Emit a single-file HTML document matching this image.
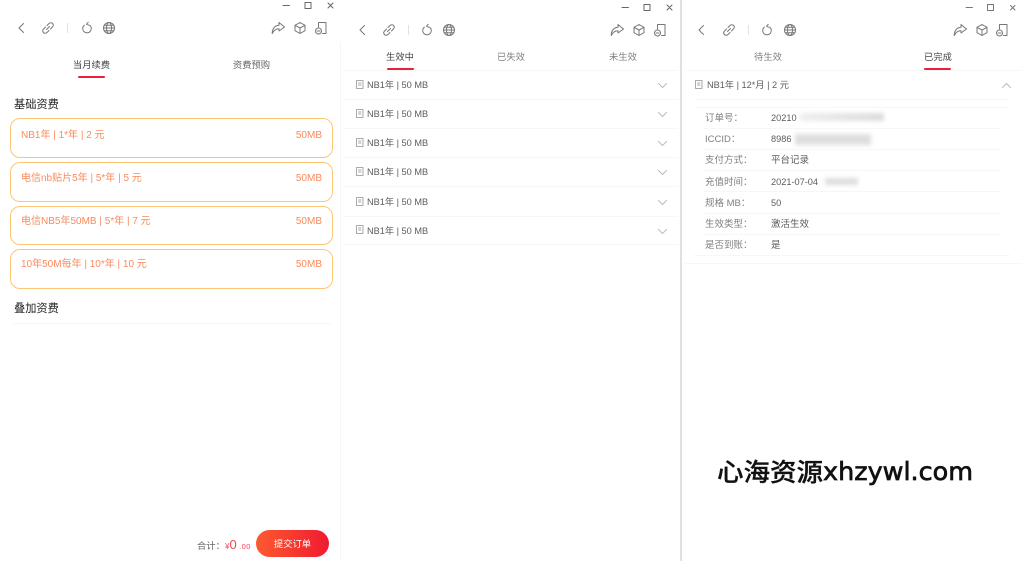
<!DOCTYPE html>
<html lang="zh">
<head>
<meta charset="utf-8">
<style>
html,body{margin:0;padding:0;background:#fff}
body{width:1024px;height:561px;position:relative;overflow:hidden;font-family:"Liberation Sans","Noto Sans CJK SC",sans-serif;color:#555}
.t{position:absolute;white-space:nowrap;line-height:14px;font-size:9.3px;filter:blur(.2px)}
.c{transform:translateX(-50%)}
.card{position:absolute;left:10px;width:321px;border:1px solid #fdc675;border-radius:10px;background:#fff;filter:blur(.25px)}
.o{color:#fb8a5c;font-size:10px}
.l{position:absolute;height:1px;background:#f7f7f7}
.u{position:absolute;height:2px;width:27px;background:#e8203a;border-radius:1px}
svg.i{position:absolute;overflow:visible;fill:none;stroke:#777;stroke-width:1;stroke-linecap:round;stroke-linejoin:round;filter:blur(.3px)}
.b{position:absolute;filter:blur(2px)}
.k{color:#808080;font-size:9.500px}
.v{color:#5c5c5c;font-size:9.500px}
.n{font-size:9.200px;color:#5c5c5c}
</style>
</head>
<body>
<svg width="0" height="0" style="position:absolute">
<defs>
<symbol id="back" viewBox="0 0 14 14" overflow="visible"><path d="M9.500 2.500L5 7l4.500 4.500"/></symbol>
<symbol id="link" viewBox="0 0 14 14" overflow="visible"><path d="M6 4.500l2-2c1.200-1.100 2.700-1 3.600 0 .9 1 .9 2.300-.1 3.400L9.500 8M8 9.500l-2 2c-1.200 1.100-2.700 1-3.600 0-.9-1-.9-2.300.1-3.400L4.500 6M5.500 8.500L8.500 5.500"/></symbol>
<symbol id="ref" viewBox="0 0 14 14" overflow="visible"><path d="M4.300 4.200a4.300 4.300 0 1 0 5.400 0M8.200 1.300L6.500 3.200l2.200 1"/></symbol>
<symbol id="globe" viewBox="0 0 14 14" overflow="visible"><circle cx="7" cy="7" r="5.500"/><ellipse cx="7" cy="7" rx="2.500" ry="5.500"/><path d="M1.500 7h11M2.300 4.300h9.400M2.300 9.700h9.400"/></symbol>
<symbol id="share" viewBox="0 0 14 14" overflow="visible"><path d="M8 1.500L13.500 6 8 10V7.800C5 7.800 2.800 9.300 1.200 12.500 1.200 8 3.500 4.500 8 4.200z"/></symbol>
<symbol id="box" viewBox="0 0 14 14" overflow="visible"><path d="M7 1.500l5 2.800v5.400l-5 2.800-5-2.800V4.300zM2 4.300L7 7l5-2.700M7 7v5.500"/></symbol>
<symbol id="ph" viewBox="0 0 14 14" overflow="visible"><path d="M4.500 6V1.500h7.500v11H8.500"/><circle cx="4.500" cy="10" r="3"/><path d="M3 10h3"/></symbol>
<symbol id="doc" viewBox="0 0 8 9" overflow="visible"><path d="M.5.500h6.500v8H.5zM2.500 3h2.500M2.500 5h2.500"/></symbol>
</defs>
</svg>

<!-- panel dividers -->
<div style="position:absolute;left:340px;top:42px;width:1px;height:519px;background:#f6f6f6"></div>
<div style="position:absolute;left:680px;top:0;width:2px;height:561px;background:#e0e0e0"></div>

<!-- toolbar 1 -->
<svg class="i" style="left:14px;top:21px" width="14" height="14"><use href="#back"/></svg>
<svg class="i" style="left:41px;top:21px" width="14" height="14"><use href="#link"/></svg>
<div style="position:absolute;left:67px;top:23px;width:1px;height:10px;background:#e2e2e2"></div>
<svg class="i" style="left:80px;top:21px" width="14" height="14"><use href="#ref"/></svg>
<svg class="i" style="left:102px;top:21px" width="14" height="14"><use href="#globe"/></svg>
<svg class="i" style="left:271px;top:21px" width="14" height="14"><use href="#share"/></svg>
<svg class="i" style="left:293px;top:21px" width="14" height="14"><use href="#box"/></svg>
<svg class="i" style="left:314px;top:21px" width="14" height="14"><use href="#ph"/></svg>
<svg class="i" style="left:282px;top:1px;stroke:#666" width="56" height="10"><path d="M1 4.500h6.500M23 1.500h6v6h-6zM46 2l5 5M51 2l-5 5"/></svg>

<!-- toolbar 2 -->
<svg class="i" style="left:355px;top:23px" width="14" height="14"><use href="#back"/></svg>
<svg class="i" style="left:382px;top:23px" width="14" height="14"><use href="#link"/></svg>
<div style="position:absolute;left:408px;top:25px;width:1px;height:10px;background:#e2e2e2"></div>
<svg class="i" style="left:420px;top:23px" width="14" height="14"><use href="#ref"/></svg>
<svg class="i" style="left:442px;top:23px" width="14" height="14"><use href="#globe"/></svg>
<svg class="i" style="left:610px;top:23px" width="14" height="14"><use href="#share"/></svg>
<svg class="i" style="left:632px;top:23px" width="14" height="14"><use href="#box"/></svg>
<svg class="i" style="left:653px;top:23px" width="14" height="14"><use href="#ph"/></svg>
<svg class="i" style="left:621px;top:3px;stroke:#666" width="56" height="10"><path d="M1 4.500h6.500M23 1.500h6v6h-6zM46 2l5 5M51 2l-5 5"/></svg>

<!-- toolbar 3 -->
<svg class="i" style="left:694px;top:23px" width="14" height="14"><use href="#back"/></svg>
<svg class="i" style="left:722px;top:23px" width="14" height="14"><use href="#link"/></svg>
<div style="position:absolute;left:748px;top:25px;width:1px;height:10px;background:#e2e2e2"></div>
<svg class="i" style="left:760px;top:23px" width="14" height="14"><use href="#ref"/></svg>
<svg class="i" style="left:783px;top:23px" width="14" height="14"><use href="#globe"/></svg>
<svg class="i" style="left:953px;top:23px" width="14" height="14"><use href="#share"/></svg>
<svg class="i" style="left:975px;top:23px" width="14" height="14"><use href="#box"/></svg>
<svg class="i" style="left:995px;top:23px" width="14" height="14"><use href="#ph"/></svg>
<svg class="i" style="left:965px;top:3px;stroke:#777" width="56" height="10"><path d="M1 4.500h6.500M22.500 1.500h6v6h-6zM45.500 2.500l4.500 4.500M50 2.500l-4.500 4.500"/></svg>

<!-- panel 1 -->
<div class="t c" style="left:91.500px;top:57.500px;color:#444">当月续费</div>
<div class="u" style="left:78px;top:76px"></div>
<div class="t c" style="left:251.500px;top:57.500px;color:#666">资费预购</div>
<div class="t" style="left:14px;top:98px;font-size:11.200px;color:#222">基础资费</div>

<div class="card" style="top:118px;height:38px"></div>
<div class="t o" style="left:21px;top:129px">NB1年 | 1*年 | 2 元</div>
<div class="t o" style="right:702px;top:129px">50MB</div>
<div class="card" style="top:162px;height:37.500px"></div>
<div class="t o" style="left:21px;top:172px">电信nb贴片5年 | 5*年 | 5 元</div>
<div class="t o" style="right:702px;top:172px">50MB</div>
<div class="card" style="top:205.500px;height:37.500px"></div>
<div class="t o" style="left:21px;top:215px">电信NB5年50MB | 5*年 | 7 元</div>
<div class="t o" style="right:702px;top:215px">50MB</div>
<div class="card" style="top:248.500px;height:38px"></div>
<div class="t o" style="left:21px;top:258px">10年50M每年 | 10*年 | 10 元</div>
<div class="t o" style="right:702px;top:258px">50MB</div>

<div class="t" style="left:14px;top:302px;font-size:11.200px;color:#222">叠加资费</div>
<div class="l" style="left:12px;width:320px;top:323px"></div>

<div class="t" style="left:197px;top:539px;font-size:9.300px;color:#666">合计：</div>
<div class="t" style="left:225px;top:537px;color:#f0465a;font-size:8px;line-height:16px">¥<span style="font-size:13px">0</span><span style="font-size:7.500px;letter-spacing:.4px"> .00</span></div>
<div style="position:absolute;left:256px;top:530px;width:73px;height:27px;border-radius:14px;background:linear-gradient(90deg,#fd5a30,#f01a30)"></div>
<div class="t c" style="left:292.500px;top:537px;color:#fff;font-size:9.300px">提交订单</div>

<!-- panel 2 -->
<div class="t c" style="left:400px;top:50px;color:#444">生效中</div>
<div class="u" style="left:387px;top:68px"></div>
<div class="t c" style="left:511px;top:50px;color:#808080">已失效</div>
<div class="t c" style="left:623px;top:50px;color:#808080">未生效</div>
<div class="l" style="left:344px;width:334px;top:70px"></div>

<svg class="i" style="left:356px;top:80px;stroke:#aaa" width="8" height="9"><use href="#doc"/></svg>
<div class="t n" style="left:367px;top:78px">NB1年 | 50 MB</div>
<svg class="i" style="left:658px;top:83px;stroke:#bbb" width="10" height="6"><path d="M.5.500L4.500 4.500 8.500.5"/></svg>
<div class="l" style="left:344px;width:334px;top:99px"></div>

<svg class="i" style="left:356px;top:109px;stroke:#aaa" width="8" height="9"><use href="#doc"/></svg>
<div class="t n" style="left:367px;top:107px">NB1年 | 50 MB</div>
<svg class="i" style="left:658px;top:112px;stroke:#bbb" width="10" height="6"><path d="M.5.500L4.500 4.500 8.500.5"/></svg>
<div class="l" style="left:344px;width:334px;top:128px"></div>

<svg class="i" style="left:356px;top:138px;stroke:#aaa" width="8" height="9"><use href="#doc"/></svg>
<div class="t n" style="left:367px;top:136px">NB1年 | 50 MB</div>
<svg class="i" style="left:658px;top:141px;stroke:#bbb" width="10" height="6"><path d="M.5.500L4.500 4.500 8.500.5"/></svg>
<div class="l" style="left:344px;width:334px;top:157px"></div>

<svg class="i" style="left:356px;top:167px;stroke:#aaa" width="8" height="9"><use href="#doc"/></svg>
<div class="t n" style="left:367px;top:165px">NB1年 | 50 MB</div>
<svg class="i" style="left:658px;top:170px;stroke:#bbb" width="10" height="6"><path d="M.5.500L4.500 4.500 8.500.5"/></svg>
<div class="l" style="left:344px;width:334px;top:186px"></div>

<svg class="i" style="left:356px;top:197px;stroke:#aaa" width="8" height="9"><use href="#doc"/></svg>
<div class="t n" style="left:367px;top:195px">NB1年 | 50 MB</div>
<svg class="i" style="left:658px;top:200px;stroke:#bbb" width="10" height="6"><path d="M.5.500L4.500 4.500 8.500.5"/></svg>
<div class="l" style="left:344px;width:334px;top:216px"></div>

<svg class="i" style="left:356px;top:225px;stroke:#aaa" width="8" height="9"><use href="#doc"/></svg>
<div class="t n" style="left:367px;top:224px">NB1年 | 50 MB</div>
<svg class="i" style="left:658px;top:229px;stroke:#bbb" width="10" height="6"><path d="M.5.500L4.500 4.500 8.500.5"/></svg>
<div class="l" style="left:344px;width:334px;top:244px"></div>

<!-- panel 3 -->
<div class="t c" style="left:768px;top:50px;color:#808080">待生效</div>
<div class="t c" style="left:938px;top:50px;color:#444">已完成</div>
<div class="u" style="left:924px;top:68px"></div>
<div class="l" style="left:684px;width:338px;top:70px"></div>
<svg class="i" style="left:695px;top:80px;stroke:#aaa" width="8" height="9"><use href="#doc"/></svg>
<div class="t n" style="left:707px;top:78px">NB1年 | 12*月 | 2 元</div>
<svg class="i" style="left:1002px;top:83px;stroke:#bbb" width="10" height="6"><path d="M.5 4.500L4.500.5 8.500 4.500"/></svg>
<div class="l" style="left:694px;width:316px;top:99px"></div>
<div class="l" style="left:694px;width:316px;top:107px"></div>

<div class="t k" style="left:705px;top:112px">订单号：</div>
<div class="t n" style="left:771px;top:111px">20210</div>
<div class="b" style="left:800px;top:113px;width:84px;height:8px;background:linear-gradient(90deg,#efefef,#dcdcdc)"></div>
<div class="l" style="left:704px;width:296px;top:128px"></div>

<div class="t k" style="left:705px;top:133px">ICCID：</div>
<div class="t n" style="left:771px;top:132px">8986</div>
<div class="b" style="left:795px;top:134px;width:76px;height:11px;background:#dedede"></div>
<div class="l" style="left:704px;width:296px;top:149px"></div>

<div class="t k" style="left:705px;top:154px">支付方式：</div>
<div class="t v" style="left:771px;top:154px">平台记录</div>
<div class="l" style="left:704px;width:296px;top:170px"></div>

<div class="t k" style="left:705px;top:176px">充值时间：</div>
<div class="t n" style="left:771px;top:174.500px">2021-07-04</div>
<div class="b" style="left:825px;top:178px;width:33px;height:7px;background:#dedede"></div>
<div class="l" style="left:704px;width:296px;top:191px"></div>

<div class="t k" style="left:705px;top:197px">规格 MB：</div>
<div class="t n" style="left:771px;top:196px">50</div>
<div class="l" style="left:704px;width:296px;top:213px"></div>

<div class="t k" style="left:705px;top:218px">生效类型：</div>
<div class="t v" style="left:771px;top:218px">激活生效</div>
<div class="l" style="left:704px;width:296px;top:234px"></div>

<div class="t k" style="left:705px;top:239px">是否到账：</div>
<div class="t v" style="left:771px;top:239px">是</div>
<div class="l" style="left:694px;width:316px;top:255px"></div>
<div class="l" style="left:684px;width:338px;top:263px"></div>

<!-- watermark -->
<svg style="position:absolute;left:700px;top:450px" width="300" height="50">
<text x="17" y="31" font-family="'Noto Sans CJK SC',sans-serif" font-size="25" font-weight="500" fill="#111" stroke="#111" stroke-width=".3" textLength="106" lengthAdjust="spacingAndGlyphs">心海资源</text>
<text x="123" y="30" font-family="'DejaVu Sans',sans-serif" font-size="25" font-weight="400" fill="#111" stroke="#111" stroke-width=".7" textLength="150" lengthAdjust="spacingAndGlyphs">xhzywl.com</text>
</svg>
</body>
</html>
